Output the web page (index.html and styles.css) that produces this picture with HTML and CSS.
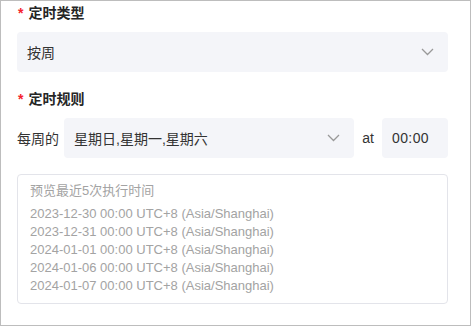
FILE: index.html
```html
<!DOCTYPE html>
<html lang="zh-CN">
<head>
<meta charset="utf-8">
<link rel="stylesheet" href="styles.css">
</head>
<body>
<div class="frame">
  <div class="label"><span class="req">*</span>定时类型</div>
  <div class="select wide">
    <span class="value">按周</span>
    <svg class="chev" width="13" height="8" viewBox="0 0 13 8"><path d="M1 1 L6.5 6.5 L12 1" fill="none" stroke="#999" stroke-width="1.3"/></svg>
  </div>
  <div class="label second"><span class="req">*</span>定时规则</div>
  <div class="row">
    <span class="prefix">每周的</span>
    <div class="select grow">
      <span class="value">星期日,星期一,星期六</span>
      <svg class="chev" width="13" height="8" viewBox="0 0 13 8"><path d="M1 1 L6.5 6.5 L12 1" fill="none" stroke="#999" stroke-width="1.3"/></svg>
    </div>
    <span class="at">at</span>
    <div class="select time"><span class="value">00:00</span></div>
  </div>
  <div class="preview">
    <div class="ptitle">预览最近5次执行时间</div>
    <div class="pline">2023-12-30 00:00 UTC+8 (Asia/Shanghai)</div>
    <div class="pline">2023-12-31 00:00 UTC+8 (Asia/Shanghai)</div>
    <div class="pline">2024-01-01 00:00 UTC+8 (Asia/Shanghai)</div>
    <div class="pline">2024-01-06 00:00 UTC+8 (Asia/Shanghai)</div>
    <div class="pline">2024-01-07 00:00 UTC+8 (Asia/Shanghai)</div>
  </div>
</div>
</body>
</html>
```
FILE: styles.css
```css
html, body {
  margin: 0;
  padding: 0;
  background: #fff;
}
body {
  font-family: "Liberation Sans", "Noto Sans CJK SC", sans-serif;
  color: #333;
}
.frame {
  box-sizing: border-box;
  width: 471px;
  height: 326px;
  border: 1px solid #bdbdbd;
  padding: 2px 22px 0 16px;
}
.label {
  font-size: 14px;
  line-height: 20px;
  font-weight: 600;
  color: #262626;
  margin-bottom: 9px;
  display: flex;
  align-items: center;
}
.label.second {
  margin-top: 17px;
}
.req {
  color: #f5222d;
  font-weight: 700;
  margin-left: 1px;
  margin-right: 5px;
  font-size: 14px;
}
.select {
  box-sizing: border-box;
  height: 40px;
  background: #f4f5f9;
  border-radius: 4px;
  display: flex;
  align-items: center;
  justify-content: space-between;
  padding: 0 14px 0 10px;
  font-size: 14px;
  color: #333;
}
.row {
  display: flex;
  align-items: center;
}
.prefix {
  font-size: 14px;
  width: 47px;
  flex: none;
}
.grow {
  width: 290px;
  flex: none;
}
.at {
  font-size: 14px;
  width: 28px;
  text-align: center;
  flex: none;
}
.time {
  width: 66px;
  flex: none;
  font-size: 14px;
  letter-spacing: 0.4px;
}
.preview {
  margin-top: 16px;
  border: 1px solid #e3e4ea;
  border-radius: 4px;
  padding: 7px 12px 8px;
  color: #a3a3a3;
  font-size: 13px;
  line-height: 18px;
}
.ptitle {
  margin-bottom: 5px;
}
```
